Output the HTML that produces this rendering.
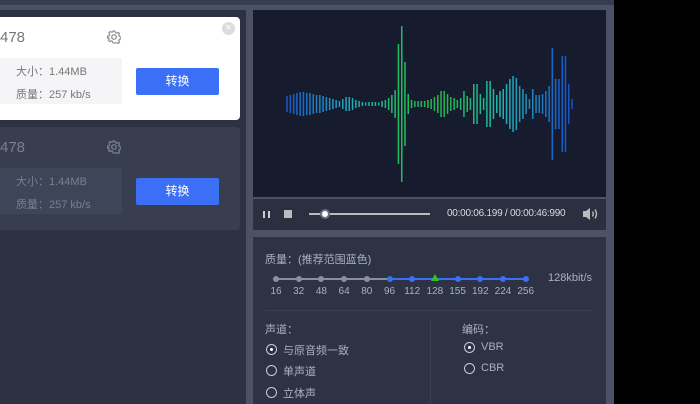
<!DOCTYPE html>
<html><head><meta charset="utf-8"><style>
*{margin:0;padding:0;box-sizing:border-box}
body{width:700px;height:404px;overflow:hidden;background:#000;position:relative;font-family:"Liberation Sans","Noto Sans CJK SC",sans-serif}
.a{position:absolute}
.t{position:absolute;white-space:nowrap}
</style></head><body>
<div class="a" style="left:0;top:0;width:614px;height:404px;background:#4c5165"></div>
<div class="a" style="left:0;top:0;width:614px;height:5px;background:#373d51"></div>
<div class="a" style="left:0;top:10px;width:246px;height:394px;background:#2d3243"></div>
<!-- card 1 -->
<div class="a" style="left:-6px;top:17px;width:246px;height:103px;background:#fff;border-radius:4px"></div>
<div class="t" style="left:0;top:29px;font-size:15px;color:#777">478</div>
<svg class="a" style="left:107px;top:30px" width="14" height="14" viewBox="0 0 14 14"><circle cx="7" cy="7" r="2.3" fill="none" stroke="#888" stroke-width="1.2"/><path d="M6 1h2l.4 1.6 1.4.6 1.4-.9 1.4 1.4-.9 1.4.6 1.4 1.6.4v2l-1.6.4-.6 1.4.9 1.4-1.4 1.4-1.4-.9-1.4.6L8 13H6l-.4-1.6-1.4-.6-1.4.9-1.4-1.4.9-1.4-.6-1.4L.6 8V6l1.6-.4.6-1.4-.9-1.4 1.4-1.4 1.4.9 1.4-.6z" fill="none" stroke="#888" stroke-width="1.1"/></svg>
<div class="a" style="left:222px;top:22px;width:13px;height:13px;border-radius:50%;background:#ddd;color:#fff;font-size:11px;line-height:13px;text-align:center">×</div>
<div class="a" style="left:0;top:58px;width:122px;height:46px;background:#f5f5f7"></div>
<div class="t" style="left:16px;top:63px;font-size:11px;color:#777">大小：1.44MB</div>
<div class="t" style="left:16px;top:86px;font-size:11px;color:#777">质量：257 kb/s</div>
<div class="a" style="left:136px;top:68px;width:83px;height:27px;background:#3b6ff5;border-radius:2px;color:#fff;font-size:12px;line-height:27px;text-align:center">转换</div>
<!-- card 2 -->
<div class="a" style="left:-6px;top:127px;width:246px;height:103px;background:#383e50;border-radius:4px"></div>
<div class="t" style="left:0;top:139px;font-size:15px;color:#7a7f8e">478</div>
<svg class="a" style="left:107px;top:140px" width="14" height="14" viewBox="0 0 14 14"><circle cx="7" cy="7" r="2.3" fill="none" stroke="#80859a" stroke-width="1.2"/><path d="M6 1h2l.4 1.6 1.4.6 1.4-.9 1.4 1.4-.9 1.4.6 1.4 1.6.4v2l-1.6.4-.6 1.4.9 1.4-1.4 1.4-1.4-.9-1.4.6L8 13H6l-.4-1.6-1.4-.6-1.4.9-1.4-1.4.9-1.4-.6-1.4L.6 8V6l1.6-.4.6-1.4-.9-1.4 1.4-1.4 1.4.9 1.4-.6z" fill="none" stroke="#80859a" stroke-width="1.1"/></svg>
<div class="a" style="left:0;top:168px;width:122px;height:46px;background:#3f4558"></div>
<div class="t" style="left:16px;top:173px;font-size:11px;color:#7a7f8e">大小：1.44MB</div>
<div class="t" style="left:16px;top:196px;font-size:11px;color:#7a7f8e">质量：257 kb/s</div>
<div class="a" style="left:136px;top:178px;width:83px;height:27px;background:#3b6ff5;border-radius:2px;color:#fff;font-size:12px;line-height:27px;text-align:center">转换</div>
<!-- waveform -->
<div class="a" style="left:253px;top:10px;width:353px;height:187px;background:#161c2e"></div>
<svg class="a" style="left:0;top:0" width="700" height="404" id="wv">
<defs><linearGradient id="g" gradientUnits="userSpaceOnUse" x1="287" y1="0" x2="572" y2="0">
<stop offset="0" stop-color="#1a55c8"/><stop offset="0.2" stop-color="#1ea8c0"/><stop offset="0.4" stop-color="#1fc060"/><stop offset="0.55" stop-color="#22b84a"/><stop offset="0.75" stop-color="#1eb8b0"/><stop offset="0.9" stop-color="#1a78c8"/><stop offset="1" stop-color="#1a50c8"/></linearGradient></defs>
<g id="bars" fill="url(#g)"></g></svg>
<script>
var h=[8,9,10,11,12,12,11,11,10,9,9,8,7,6,5,4,3,5,7,7,6,4,3,2,1.5,2,2,2,1.5,3,4,6,9,14,60,78,42,10,4,3,3,3,3,4,5,7,9,13,13,10,7,6,4,6,13,8,6,20,20,10,6,23,23,15,9,13,15,20,25,28,26,18,15,10,5,15,9,9,10,13,18,56,25,25,48,48,20,5];
var s='';for(var i=0;i<h.length;i++){var x=287+i*(285/(h.length-1));s+='<rect x="'+(x-0.7).toFixed(1)+'" y="'+(104-h[i])+'" width="1.5" height="'+(2*h[i])+'"/>';}
document.getElementById('bars').innerHTML=s;
</script>
<!-- controls -->
<div class="a" style="left:253px;top:199px;width:353px;height:31px;background:#2b3041"></div>
<div class="a" style="left:263px;top:211px;width:2px;height:7px;background:#ccc"></div>
<div class="a" style="left:268px;top:211px;width:2px;height:7px;background:#ccc"></div>
<div class="a" style="left:284px;top:210px;width:8px;height:8px;background:#bbb"></div>
<div class="a" style="left:309px;top:213px;width:121px;height:2px;background:#bbb"></div>
<div class="a" style="left:320px;top:209px;width:10px;height:10px;border-radius:50%;background:#6a6f7e"></div>
<div class="a" style="left:322px;top:211px;width:6px;height:6px;border-radius:50%;background:#fff"></div>
<div class="t" style="left:447px;top:208px;font-size:10px;letter-spacing:-0.25px;color:#d8dbe3">00:00:06.199 / 00:00:46:990</div>
<svg class="a" style="left:582px;top:207px" width="18" height="14" viewBox="0 0 18 14"><path d="M1 4h3l4-3v12l-4-3H1z" fill="#bbb"/><path d="M10.5 4.5q1.5 2.5 0 5M13 2.5q3 4.5 0 9" fill="none" stroke="#bbb" stroke-width="1.4"/></svg>
<!-- settings -->
<div class="a" style="left:253px;top:237px;width:353px;height:167px;background:#2d3345"></div>
<div class="t" style="left:265px;top:251px;font-size:11px;color:#aab0bf">质量：(推荐范围蓝色)</div>
<div class="a" style="left:276px;top:278px;width:114px;height:2px;background:#8a8f9e"></div>
<div class="a" style="left:390px;top:278px;width:136px;height:2px;background:#3b6ff5"></div>
<div id="dots"></div>
<script>
var L=[16,32,48,64,80,96,112,128,155,192,224,256],d='';
for(var i=0;i<12;i++){var x=276+i*22.7;
if(i==7)d+='<div class="a" style="left:'+(x-4)+'px;top:274px;width:0;height:0;border-left:4px solid transparent;border-right:4px solid transparent;border-bottom:7px solid #2ec41c"></div>';
else d+='<div class="a" style="left:'+(x-3)+'px;top:276px;width:6px;height:6px;border-radius:50%;background:'+(i<5?'#8a8f9e':'#3b6ff5')+'"></div>';
d+='<div class="t" style="left:'+(x-15)+'px;width:30px;text-align:center;top:286px;font-size:10px;color:#aab0bf">'+L[i]+'</div>';}
document.getElementById('dots').innerHTML=d;
</script>
<div class="t" style="left:548px;top:272px;font-size:11px;color:#aab0bf">128kbit/s</div>
<div class="a" style="left:265px;top:310px;width:328px;height:1px;background:#3a4052"></div>
<div class="a" style="left:430px;top:320px;width:1px;height:84px;background:#3a4052"></div>
<div class="t" style="left:265px;top:321px;font-size:11px;color:#aab0bf">声道：</div>
<div class="t" style="left:462px;top:321px;font-size:11px;color:#aab0bf">编码：</div>
<div class="a" style="left:266px;top:344px;width:11px;height:11px;border-radius:50%;border:1px solid #c8ccd6"></div>
<div class="a" style="left:270px;top:348px;width:3px;height:3px;border-radius:50%;background:#fff"></div>
<div class="t" style="left:283px;top:342px;font-size:11px;color:#aab0bf">与原音频一致</div>
<div class="a" style="left:266px;top:365px;width:11px;height:11px;border-radius:50%;border:1px solid #c8ccd6"></div>
<div class="t" style="left:283px;top:363px;font-size:11px;color:#aab0bf">单声道</div>
<div class="a" style="left:266px;top:387px;width:11px;height:11px;border-radius:50%;border:1px solid #c8ccd6"></div>
<div class="t" style="left:283px;top:385px;font-size:11px;color:#aab0bf">立体声</div>
<div class="a" style="left:464px;top:342px;width:11px;height:11px;border-radius:50%;border:1px solid #c8ccd6"></div>
<div class="a" style="left:468px;top:346px;width:3px;height:3px;border-radius:50%;background:#fff"></div>
<div class="t" style="left:481px;top:341px;font-size:11px;color:#aab0bf">VBR</div>
<div class="a" style="left:464px;top:363px;width:11px;height:11px;border-radius:50%;border:1px solid #c8ccd6"></div>
<div class="t" style="left:481px;top:362px;font-size:11px;color:#aab0bf">CBR</div>
</body></html>
